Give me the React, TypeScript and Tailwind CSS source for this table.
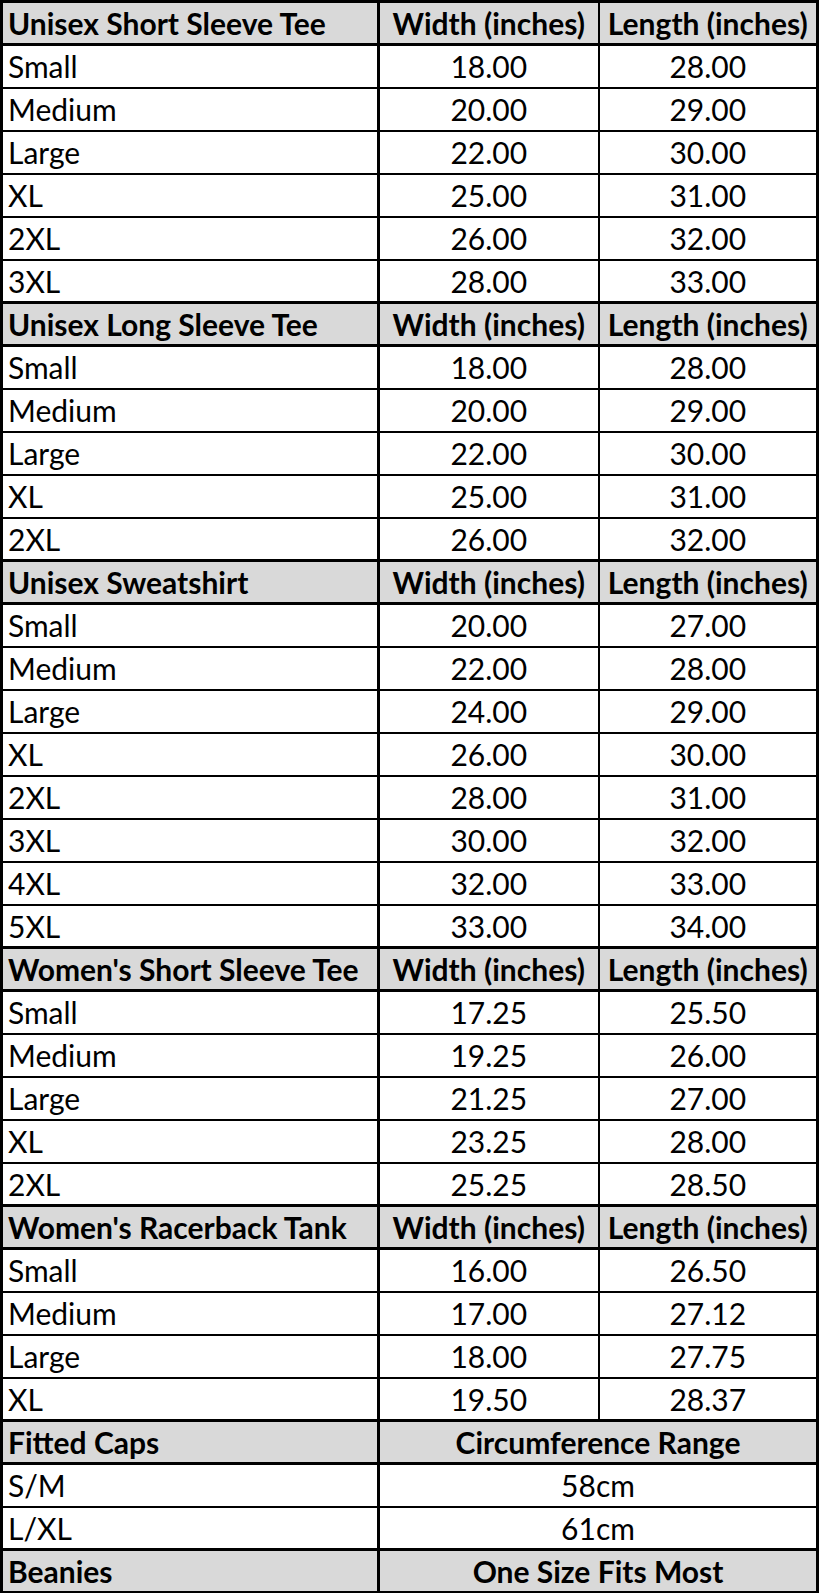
import React from "react";

type Section = {
  title: string;
  cols: string[];
  rows: string[][];
};

const sections: Section[] = [
  {
    title: "Unisex Short Sleeve Tee",
    cols: ["Width (inches)", "Length (inches)"],
    rows: [
      ["Small", "18.00", "28.00"],
      ["Medium", "20.00", "29.00"],
      ["Large", "22.00", "30.00"],
      ["XL", "25.00", "31.00"],
      ["2XL", "26.00", "32.00"],
      ["3XL", "28.00", "33.00"],
    ],
  },
  {
    title: "Unisex Long Sleeve Tee",
    cols: ["Width (inches)", "Length (inches)"],
    rows: [
      ["Small", "18.00", "28.00"],
      ["Medium", "20.00", "29.00"],
      ["Large", "22.00", "30.00"],
      ["XL", "25.00", "31.00"],
      ["2XL", "26.00", "32.00"],
    ],
  },
  {
    title: "Unisex Sweatshirt",
    cols: ["Width (inches)", "Length (inches)"],
    rows: [
      ["Small", "20.00", "27.00"],
      ["Medium", "22.00", "28.00"],
      ["Large", "24.00", "29.00"],
      ["XL", "26.00", "30.00"],
      ["2XL", "28.00", "31.00"],
      ["3XL", "30.00", "32.00"],
      ["4XL", "32.00", "33.00"],
      ["5XL", "33.00", "34.00"],
    ],
  },
  {
    title: "Women's Short Sleeve Tee",
    cols: ["Width (inches)", "Length (inches)"],
    rows: [
      ["Small", "17.25", "25.50"],
      ["Medium", "19.25", "26.00"],
      ["Large", "21.25", "27.00"],
      ["XL", "23.25", "28.00"],
      ["2XL", "25.25", "28.50"],
    ],
  },
  {
    title: "Women's Racerback Tank",
    cols: ["Width (inches)", "Length (inches)"],
    rows: [
      ["Small", "16.00", "26.50"],
      ["Medium", "17.00", "27.12"],
      ["Large", "18.00", "27.75"],
      ["XL", "19.50", "28.37"],
    ],
  },
  {
    title: "Fitted Caps",
    cols: ["Circumference Range"],
    rows: [
      ["S/M", "58cm"],
      ["L/XL", "61cm"],
    ],
  },
  {
    title: "Beanies",
    cols: ["One Size Fits Most"],
    rows: [],
  },
];

export default function App() {
  return (
    <div className="w-[819px] bg-white font-['Lato',sans-serif] text-[30px] leading-none text-black">
      <table className="w-full table-fixed border-collapse border-[3px] border-black">
        <colgroup>
          <col className="w-[377px]" />
          <col className="w-[220px]" />
          <col />
        </colgroup>
        <tbody>
          {sections.map((s) => (
            <React.Fragment key={s.title}>
              <tr className="h-[43px] bg-[#d9d9d9] font-bold">
                <td className="border-y-[3px] border-r-[3px] border-black pl-[5px] whitespace-nowrap">
                  {s.title}
                </td>
                {s.cols.length === 2 ? (
                  <>
                    <td className="border-y-[3px] border-r-2 border-black text-center whitespace-nowrap">
                      {s.cols[0]}
                    </td>
                    <td className="border-y-[3px] border-black text-center whitespace-nowrap">
                      {s.cols[1]}
                    </td>
                  </>
                ) : (
                  <td colSpan={2} className="border-y-[3px] border-black text-center whitespace-nowrap">
                    {s.cols[0]}
                  </td>
                )}
              </tr>
              {s.rows.map((r, i) => (
                <tr key={i} className="h-[43px]">
                  <td className="border-b-2 border-r-[3px] border-black pl-[5px]">{r[0]}</td>
                  {r.length === 3 ? (
                    <>
                      <td className="border-b-2 border-r-2 border-black text-center">{r[1]}</td>
                      <td className="border-b-2 border-black text-center">{r[2]}</td>
                    </>
                  ) : (
                    <td colSpan={2} className="border-b-2 border-black text-center">
                      {r[1]}
                    </td>
                  )}
                </tr>
              ))}
            </React.Fragment>
          ))}
        </tbody>
      </table>
    </div>
  );
}
